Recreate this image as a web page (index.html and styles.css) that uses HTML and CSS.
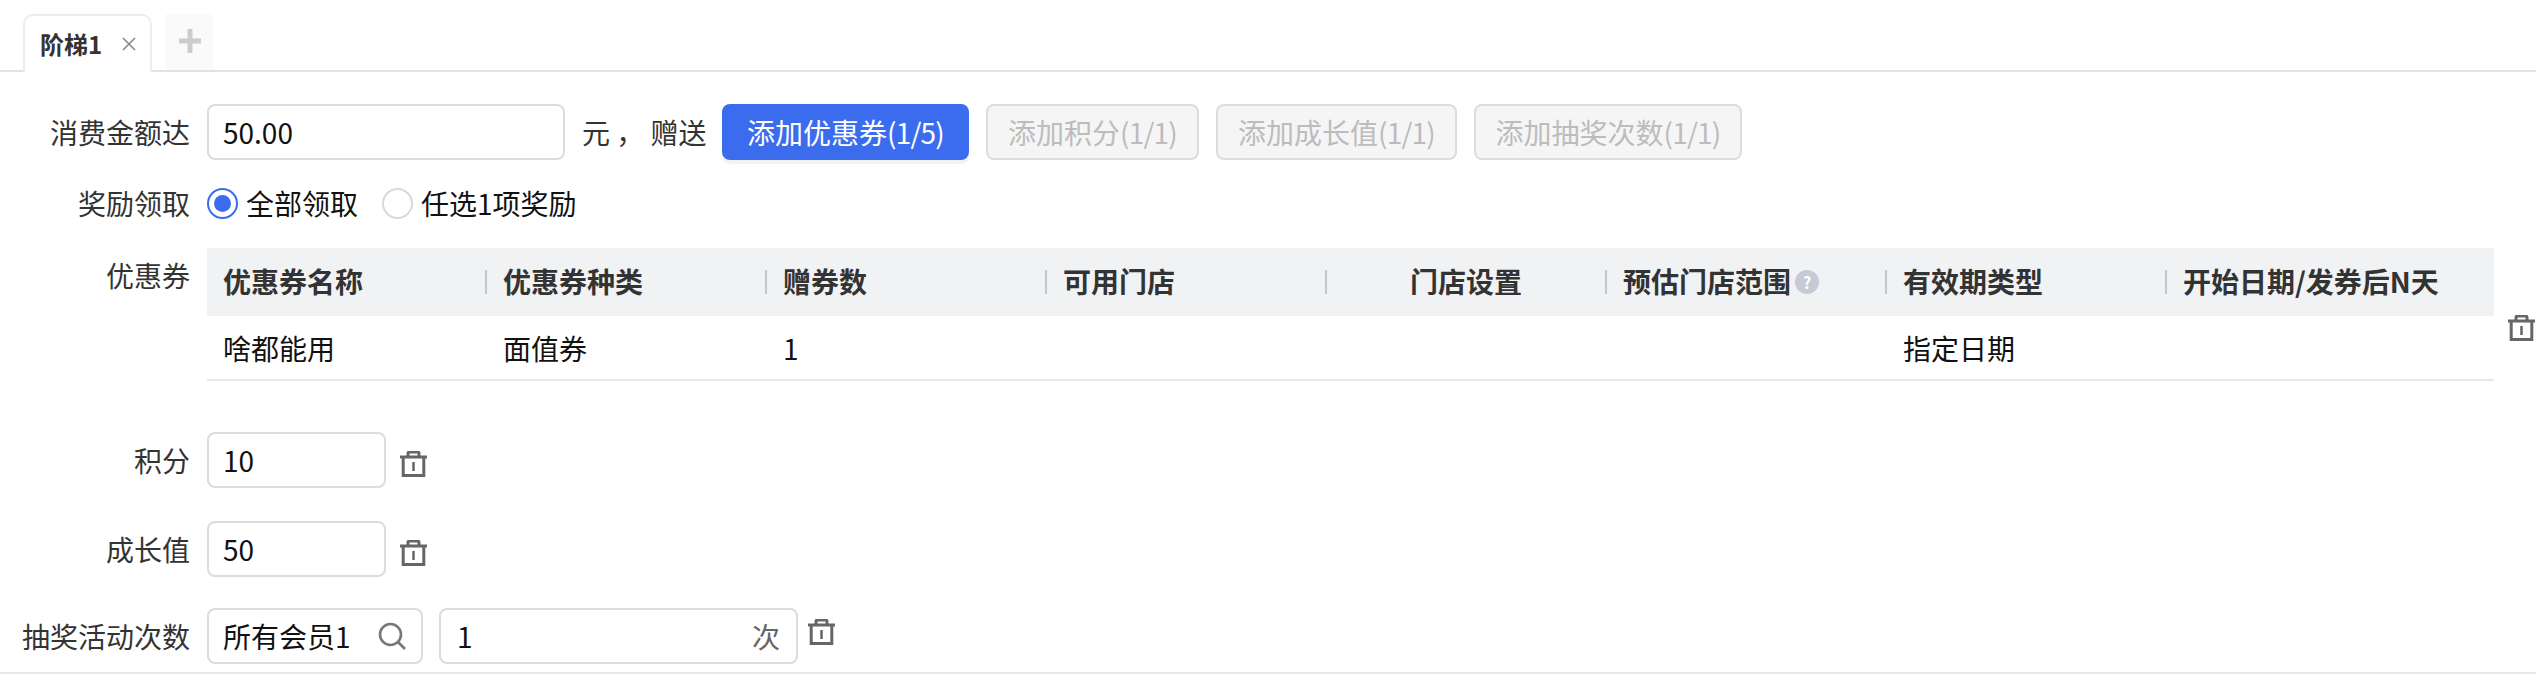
FILE: index.html
```html
<!DOCTYPE html>
<html lang="zh-CN">
<head>
<meta charset="utf-8">
<title>阶梯</title>
<link rel="stylesheet" href="styles.css">
</head>
<body>
<svg class="defs" aria-hidden="true"><defs>
<symbol id="trash" viewBox="0 0 27 27"><path d="M0 6H27M8 5V2.500a1.500 1.500 0 0 1 1.500-1.500h8a1.500 1.500 0 0 1 1.500 1.500V5M3.200 6V24.500H23.800V6" fill="none" stroke="currentColor" stroke-width="3"/><path d="M13.500 11V20" fill="none" stroke="currentColor" stroke-width="2.500"/></symbol>
</defs></svg>
<main class="page">
  <nav class="tabs">
    <div class="tab"><span class="tab-title">阶梯1</span>
      <svg class="tab-close" viewBox="0 0 14 14"><path d="M1 1L13 13M13 1L1 13" fill="none" stroke="#888" stroke-width="1.600"/></svg>
    </div>
    <div class="tab-add"><svg class="tab-plus" viewBox="0 0 22 24"><path d="M11 0V24M0 12H22" fill="none" stroke="#ccc" stroke-width="5"/></svg></div>
  </nav>

  <div class="row row-amount">
    <div class="label">消费金额达</div>
    <div class="field w-amount">50.00</div>
    <span class="text-after">元 ， 赠送</span>
    <button class="btn btn-primary">添加优惠券<span class="count">(1/5)</span></button>
    <button class="btn btn-off">添加积分<span class="count">(1/1)</span></button>
    <button class="btn btn-off">添加成长值<span class="count">(1/1)</span></button>
    <button class="btn btn-off">添加抽奖次数<span class="count">(1/1)</span></button>
  </div>

  <div class="row row-radio">
    <div class="label">奖励领取</div>
    <span class="radio radio-on"></span><span class="radio-text">全部领取</span>
    <span class="radio"></span><span class="radio-text">任选1项奖励</span>
  </div>

  <div class="row row-table">
    <div class="label label-top">优惠券</div>
    <div class="grid">
      <div class="hcell"><span class="hlabel">优惠券名称</span></div>
      <div class="hcell"><span class="hlabel">优惠券种类</span></div>
      <div class="hcell"><span class="hlabel">赠券数</span></div>
      <div class="hcell"><span class="hlabel">可用门店</span></div>
      <div class="hcell"><span class="hlabel center">门店设置</span></div>
      <div class="hcell"><span class="hlabel">预估门店范围</span><span class="help">?</span></div>
      <div class="hcell"><span class="hlabel">有效期类型</span></div>
      <div class="hcell"><span class="hlabel">开始日期/发券后N天</span></div>
      <div class="dcell first">啥都能用</div>
      <div class="dcell">面值券</div>
      <div class="dcell">1</div>
      <div class="dcell"></div>
      <div class="dcell"></div>
      <div class="dcell"></div>
      <div class="dcell">指定日期</div>
      <div class="dcell"></div>
    </div>
    <svg class="trash trash-table"><use href="#trash"/></svg>
  </div>

  <div class="row row-points">
    <div class="label">积分</div>
    <div class="field w-small">10</div>
    <svg class="trash trash-low"><use href="#trash"/></svg>
  </div>

  <div class="row row-growth">
    <div class="label">成长值</div>
    <div class="field w-small">50</div>
    <svg class="trash trash-low"><use href="#trash"/></svg>
  </div>

  <div class="row row-lottery">
    <div class="label">抽奖活动次数</div>
    <div class="field w-select"><span class="grow">所有会员1</span>
      <svg class="search" viewBox="0 0 28 28"><circle cx="12.500" cy="12.500" r="10.500" fill="none" stroke="#777" stroke-width="2.600"/><path d="M20 20L27 27" stroke="#777" stroke-width="2.600"/></svg>
    </div>
    <div class="field w-count"><span class="grow">1</span><span class="unit">次</span></div>
    <svg class="trash trash-last"><use href="#trash"/></svg>
  </div>
</main>
</body>
</html>
```

FILE: styles.css
```css
* { box-sizing: border-box; }
html, body { margin: 0; padding: 0; background: #fff; }
body {
  width: 2536px;
  height: 674px;
  overflow: hidden;
  font-family: "Noto Sans CJK SC", sans-serif;
  font-size: 28px;
  line-height: 40px;
  color: #333;
}
.defs { display: none; }
.page { height: 674px; border-bottom: 2px solid #e8e8e8; }

.tabs {
  display: flex;
  align-items: flex-end;
  height: 72px;
  padding: 14px 0 0 23px;
  border-bottom: 2px solid #e2e2e2;
}
.tab {
  display: flex;
  align-items: center;
  width: 129px;
  height: 58px;
  margin-bottom: -2px;
  padding: 0 0 0 15px;
  background: #fff;
  border: 2px solid #ececec;
  border-bottom: 0;
  border-radius: 10px 10px 0 0;
}
.tab-title { font-size: 24px; font-weight: 700; color: #333; line-height: 56px; }
.tab-close { width: 14px; height: 14px; margin-left: 20px; }
.tab-add {
  display: flex;
  align-items: center;
  justify-content: center;
  width: 48px;
  height: 56px;
  margin-left: 13px;
  background: #fafafa;
}
.tab-plus { width: 22px; height: 24px; margin: -3px 0 0 2px; }

.row { display: flex; align-items: center; }
.label { width: 190px; flex: none; text-align: right; color: #333; margin-right: 17px; white-space: nowrap; }
.row-amount { margin-top: 32px; height: 56px; }
.row-radio { margin-top: 27px; height: 32px; }
.row-table { margin-top: 29px; align-items: flex-start; }
.row-points { margin-top: 51px; height: 56px; }
.row-growth { margin-top: 33px; height: 56px; }
.row-lottery { margin-top: 31px; height: 56px; }
.label-top { padding-top: 7px; }

.field {
  display: flex;
  align-items: center;
  height: 56px;
  padding: 0 16px 0 14px;
  border: 2px solid #dcdcdc;
  border-radius: 8px;
  background: #fff;
  color: #111;
  white-space: nowrap;
}
.w-amount { width: 358px; }
.w-small { width: 179px; }
.w-select { width: 216px; }
.w-count { width: 359px; margin-left: 16px; padding-left: 16px; }
.grow { flex: 1; }
.unit { color: #666; }
.search { width: 28px; height: 28px; margin: 0 -1px 0 0; }

.text-after { margin-left: 17px; width: 140px; flex: none; color: #333; white-space: nowrap; }
.btn {
  height: 56px;
  padding: 0;
  font: inherit;
  border-radius: 8px;
  white-space: nowrap;
}
.count { letter-spacing: -0.8px; }
.btn-primary {
  width: 247px;
  color: #fff;
  background: #3c6cee;
  border: 0;
  box-shadow: 0 4px 0 #f3f3f3;
}
.btn-off {
  margin-left: 17px;
  color: #bcbcbc;
  background: #f5f5f5;
  border: 2px solid #dcdcdc;
}
.btn-off:nth-of-type(2) { width: 213px; }
.btn-off:nth-of-type(3) { width: 241px; }
.btn-off:nth-of-type(4) { width: 268px; }

.radio {
  flex: none;
  width: 31px;
  height: 31px;
  border: 2px solid #d9d9d9;
  border-radius: 50%;
  background: #fff;
  display: flex;
  align-items: center;
  justify-content: center;
}
.radio-on { border-color: #3c6cee; }
.radio-on::after {
  content: "";
  width: 17px;
  height: 17px;
  border-radius: 50%;
  background: #3c6cee;
}
.radio-text { margin-left: 8px; margin-right: 24px; color: #111; white-space: nowrap; }

.grid {
  display: grid;
  grid-template-columns: 278px repeat(6, 280px) 329px;
  grid-template-rows: 68px 65px;
  width: 2287px;
  flex: none;
}
.hcell {
  display: flex;
  align-items: center;
  background: #f1f2f4;
  color: #333;
  font-weight: 700;
  white-space: nowrap;
}
.hlabel { margin-top: -2px; }
.hcell:first-child { padding-left: 16px; }
.hcell + .hcell::before {
  content: "";
  flex: none;
  width: 2px;
  height: 24px;
  margin-right: 16px;
  background: #c4c6cb;
}
.center { flex: 1; text-align: center; padding-right: 16px; }
.help {
  flex: none;
  width: 24px;
  height: 24px;
  margin-left: 4px;
  border-radius: 50%;
  background: #c5cad5;
  color: #fff;
  font-size: 16px;
  font-weight: 700;
  line-height: 24px;
  text-align: center;
}
.dcell {
  display: flex;
  align-items: center;
  padding-left: 18px;
  color: #111;
  border-bottom: 2px solid #e8e8e8;
}
.dcell.first { padding-left: 16px; }

.trash { display: block; width: 27px; height: 27px; flex: none; color: #666; }
.trash-table { margin: 67px 0 0 14px; }
.trash-low { margin: 4px 0 -4px 14px; }
.trash-last { margin: -4px 0 4px 10px; }
```
